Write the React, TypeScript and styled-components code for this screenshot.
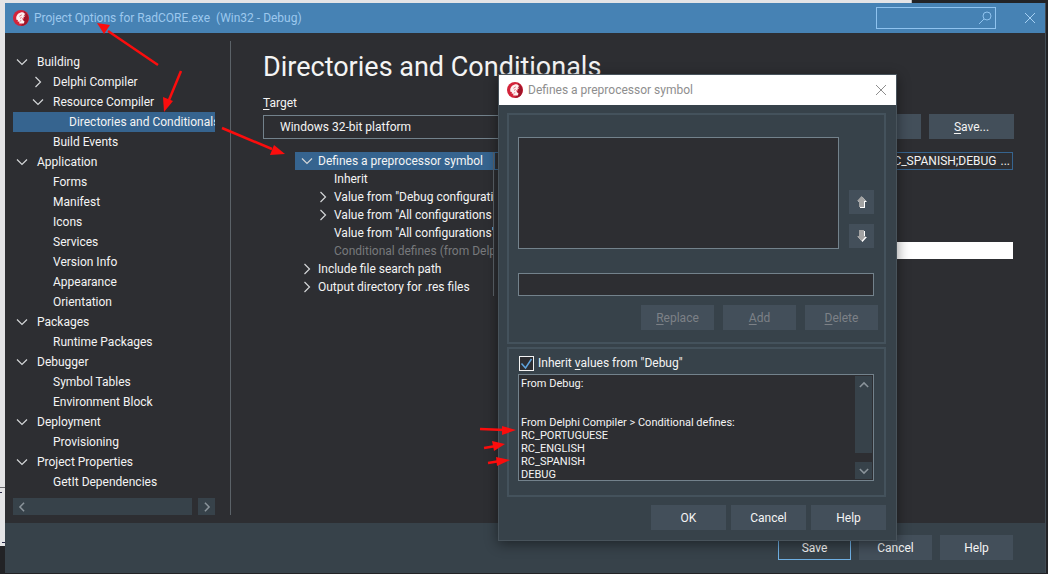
import React from "react";
import styled, { createGlobalStyle } from "styled-components";

const c = {
  base: "#2d2e32",
  panel: "#37424a",
  button: "#434f5a",
  select: "#36648f",
  title: "#4682b4",
  titleText: "#9cc8ee",
  line: "#73828c",
  group: "#44525c",
  text: "#f4f4f4",
  dim: "#7d8187",
};

const Global = createGlobalStyle`
  *, *::before, *::after { box-sizing: border-box; }
  html, body { margin: 0; }
  body, button, input, select, textarea {
    font-family: Roboto, "Open Sans", sans-serif;
    font-size: 12px;
    color: ${c.text};
  }
  u { text-underline-offset: 2px; }
`;

const Desktop = styled.div`
  position: relative;
  display: flex;
  min-height: 100vh;
  padding: 3px 2px 1px 5px;
  overflow: hidden;
  background:
    linear-gradient(#6b6b70, #6b6b70) 0 487px / 5px 1px no-repeat,
    linear-gradient(#2a2a48, #2a2a48) 0 492px / 2px 1px no-repeat,
    linear-gradient(#2a2a48, #2a2a48) 2px 542px / 3px 1px no-repeat,
    linear-gradient(#e4e4e6, #e4e4e6) 0 0 / 5px 546px no-repeat,
    linear-gradient(#e4e4e6, #e4e4e6) 0 0 / 87% 3px no-repeat,
    #222326;
`;

const Window = styled.main`
  display: flex;
  flex: 1;
  flex-direction: column;
  min-width: 0;
  background: ${c.base};
  border-right: 1px solid #414b53;
`;

const TitleBar = styled.header`
  display: flex;
  align-items: center;
  height: 30px;
  padding: 0 9px 0 8px;
  gap: 5px;
  background: ${c.title};
  color: ${c.titleText};
`;

const WindowTitle = styled.span`
  flex: 1;
  white-space: pre;
`;

const SearchBox = styled.label`
  display: flex;
  align-items: center;
  width: 120px;
  height: 22px;
  margin-right: 23px;
  padding-right: 3px;
  border: 1px solid #8fc3ef;
`;

const SearchInput = styled.input`
  flex: 1;
  min-width: 0;
  padding: 0 4px;
  border: 0;
  outline: 0;
  background: transparent;
`;

const CloseButton = styled.button`
  display: flex;
  padding: 0;
  border: 0;
  background: transparent;
  color: inherit;
`;

const Body = styled.div`
  display: flex;
  flex: 1;
  padding: 8px 0;
`;

const Sidebar = styled.nav`
  display: flex;
  flex: none;
  flex-direction: column;
  justify-content: space-between;
  width: 226px;
  padding: 0 15px 0 8px;
  border-right: 1px solid #5b6268;
`;

const Tree = styled.ul`
  margin: 0;
  padding: 11px 0 0;
  list-style: none;
`;

const TreeRow = styled.li<{ $level: number; $selected?: boolean }>`
  display: flex;
  align-items: center;
  height: 20px;
  padding-left: ${(p) => p.$level * 16 + 3}px;
  gap: 9px;
  overflow: hidden;
  white-space: nowrap;
  background: ${(p) => (p.$selected ? c.select : "transparent")};
`;

const ChevronSlot = styled.span`
  display: flex;
  flex: none;
  justify-content: center;
  width: 12px;
`;

const ScrollRow = styled.div`
  display: flex;
  gap: 6px;
  height: 17px;
`;

const ScrollPart = styled.button<{ $grow?: boolean }>`
  display: flex;
  flex: ${(p) => (p.$grow ? "1" : "none")};
  align-items: center;
  justify-content: ${(p) => (p.$grow ? "flex-start" : "center")};
  width: 17px;
  height: 17px;
  padding: 0 ${(p) => (p.$grow ? "4px" : "0")};
  border: 0;
  background: ${c.panel};
  color: #8b949b;
`;

const Content = styled.section`
  flex: 1;
  min-width: 0;
  padding: 8px 31px 0 32px;
`;

const Heading = styled.h1`
  margin: 0;
  font-size: 27px;
  font-weight: 400;
  line-height: 36px;
  white-space: nowrap;
`;

const FieldLabel = styled.label`
  display: block;
  margin: 9px 0 2px;
  line-height: 18px;
`;

const TargetRow = styled.div`
  display: flex;
  gap: 8px;
`;

const TargetSelect = styled.select`
  flex: 1;
  min-width: 0;
  height: 24px;
  margin-top: 1px;
  padding: 0 16px;
  appearance: none;
  border: 1px solid ${c.line};
  border-radius: 0;
  background: ${c.base};
`;

const Button = styled.button<{ $width: number; $focused?: boolean }>`
  flex: none;
  width: ${(p) => p.$width}px;
  height: 25px;
  padding: 0;
  border: 1px solid ${(p) => (p.$focused ? "#6fb0e4" : c.button)};
  background: ${(p) => (p.$focused ? c.panel : c.button)};
  &:disabled {
    color: ${c.dim};
  }
`;

const Properties = styled.table`
  width: calc(100% - 33px);
  margin: 13px 0 0 32px;
  border-collapse: separate;
  border-spacing: 0;
  table-layout: fixed;
`;

const NameCell = styled.th<{ $level: number; $selected?: boolean; $muted?: boolean }>`
  width: 199px;
  height: 18px;
  padding: 0 0 0 ${(p) => p.$level * 16 + 6}px;
  border-right: 1px solid #5b6268;
  font-weight: 400;
  line-height: 18px;
  text-align: left;
  color: ${(p) => (p.$muted ? "#77797c" : c.text)};
  background: ${(p) => (p.$selected ? c.select : "transparent")};
`;

const NameLine = styled.div`
  display: flex;
  align-items: center;
  gap: 5px;
  height: 18px;
  overflow: hidden;
  white-space: nowrap;
`;

const ValueCell = styled.td`
  height: 18px;
  padding: 0;
  text-align: right;
  vertical-align: top;
  line-height: 16px;
  white-space: nowrap;
`;

const ValueLine = styled.div`
  display: flex;
  justify-content: flex-end;
  gap: 4px;
  height: 18px;
  padding-right: 2px;
  overflow: hidden;
  border: 1px solid ${c.select};
`;

const EmptyValue = styled.div`
  height: 17px;
  margin-left: 24px;
  background: #fff;
`;

const MoreButton = styled.button`
  padding: 0;
  border: 0;
  background: transparent;
  line-height: 16px;
`;

const Footer = styled.footer<{ $inDialog?: boolean }>`
  display: flex;
  justify-content: flex-end;
  gap: ${(p) => (p.$inDialog ? 5 : 8)}px;
  padding: ${(p) => (p.$inDialog ? "8px 10px 10px" : "12px 32px 13px")};
  background: ${c.panel};
`;

const Dialog = styled.div`
  position: absolute;
  top: 74px;
  left: 498px;
  width: 399px;
  border: 1px solid #48535b;
  background: ${c.panel};
  box-shadow: 0 3px 12px rgba(0, 0, 0, 0.45);
`;

const DialogTitle = styled.div`
  display: flex;
  align-items: center;
  gap: 5px;
  height: 30px;
  padding: 0 9px 0 8px;
  background: #fff;
  color: #8e8e8e;
`;

const DialogBody = styled.div`
  display: flex;
  flex-direction: column;
  gap: 3px;
  padding: 8px 10px 0 8px;
`;

const Group = styled.div<{ $top: number; $bottom: number }>`
  padding: ${(p) => p.$top}px 10px ${(p) => p.$bottom}px 9px;
  border: 2px solid ${c.group};
`;

const ListRow = styled.div`
  display: flex;
  align-items: flex-end;
  gap: 10px;
`;

const ListBox = styled.div`
  flex: 1;
  height: 112px;
  border: 1px solid ${c.line};
  background: ${c.base};
`;

const MoveButtons = styled.div`
  display: flex;
  flex-direction: column;
  gap: 10px;
  padding-bottom: 1px;
`;

const MoveButton = styled.button`
  display: flex;
  align-items: center;
  justify-content: center;
  width: 25px;
  height: 24px;
  padding: 0;
  border: 0;
  background: ${c.button};
`;

const ValueInput = styled.input`
  display: block;
  width: 100%;
  height: 23px;
  margin-top: 24px;
  padding: 0 4px;
  border: 1px solid ${c.line};
  border-radius: 0;
  outline: 0;
  background: ${c.base};
`;

const ActionRow = styled.div`
  display: flex;
  justify-content: flex-end;
  gap: 9px;
  margin: 9px -4px 0 0;
`;

const CheckLabel = styled.label`
  display: flex;
  align-items: center;
  gap: 4px;
  height: 16px;
  line-height: 16px;
  white-space: pre;
`;

const Checkbox = styled.input`
  width: 15px;
  height: 15px;
  margin: 0 0 0 1px;
  appearance: none;
  border: 1px solid #f4f4f4;
  background: ${c.base}
    url("data:image/svg+xml,%3Csvg xmlns='http://www.w3.org/2000/svg' viewBox='0 0 13 13'%3E%3Cpath d='M1.500 6.500l4 4.500 6-9' fill='none' stroke='%235fa3dc' stroke-width='1.500'/%3E%3C/svg%3E")
    center / 13px 13px no-repeat;
`;

const MemoFrame = styled.div`
  display: flex;
  height: 107px;
  margin-top: 3px;
  padding: 1px;
  border: 1px solid ${c.line};
  background: ${c.base};
`;

const Memo = styled.textarea`
  flex: 1;
  min-width: 0;
  padding: 1px 1px 0;
  border: 0;
  outline: 0;
  resize: none;
  overflow: hidden;
  background: transparent;
  font-size: 11px;
  line-height: 13px;
`;

const MemoScroll = styled.div`
  display: flex;
  flex-direction: column;
  justify-content: space-between;
`;

const MemoThumb = styled.div`
  height: 77px;
  background: ${c.panel};
`;

const Arrows = styled.svg`
  position: absolute;
  top: 0;
  left: 0;
  pointer-events: none;
`;

const chevronPaths = {
  down: "M1 3.5l5 5 5-5",
  right: "M3.5 1l5 5-5 5",
  left: "M8.5 1l-5 5 5 5",
  up: "M1 8.5l5-5 5 5",
};

function Chevron({ dir, size = 12, color = "#d4d6d8" }: { dir: keyof typeof chevronPaths; size?: number; color?: string }) {
  return (
    <svg width={size} height={size} viewBox="0 0 12 12" fill="none" stroke={color} strokeWidth={size < 12 ? 1.8 : 1.2} aria-hidden>
      <path d={chevronPaths[dir]} />
    </svg>
  );
}

function Logo() {
  return (
    <svg width="16" height="16" viewBox="0 0 16 16" aria-hidden>
      <circle cx="8" cy="8" r="8" fill="#d3243a" />
      <path d="M11 1.200A8 8 0 0 1 13 14.200 8 8 0 0 1 8 16L10 13l1-5z" fill="#a01529" />
      <path
        d="M3.200 8C3.400 4.600 6 2.200 9.600 2.200L12.600 3.400l-1.800.4 1.900 1.400-2.100 0 1.500 1.700-2-.2 1 1.800-1.700-.4.4 2 1.700 1.300-.7 2H6.200l.2-1.900-1.700.2.2-1.700-1.500-.3z"
        fill="#fdf0f0"
      />
      <path d="M6.400 6.300l2.400-1.500M7 8.400l1.600-.9M7.800 10.200l-.2 1.200" stroke="#d3243a" strokeWidth=".6" />
    </svg>
  );
}

function Cross({ color }: { color: string }) {
  return (
    <svg width="12" height="12" viewBox="0 0 12 12" stroke={color} aria-hidden>
      <path d="M1 1l10 10M11 1L1 11" />
    </svg>
  );
}

function MoveArrow({ down }: { down?: boolean }) {
  const d = down ? "M3 0h5v6h2L5.500 11 1 6h2z" : "M5.500 0L10 5H8v6H3V5H1z";
  return (
    <svg width="12" height="13" viewBox="0 0 12 13" aria-hidden>
      <path d={d} fill="#fff" transform="translate(1 1)" />
      <path d={d} fill="#a3a3a3" />
    </svg>
  );
}

type Item = { text: string; level: number; open?: boolean; closed?: boolean; selected?: boolean };

const tree: Item[] = [
  { text: "Building", level: 0, open: true },
  { text: "Delphi Compiler", level: 1, closed: true },
  { text: "Resource Compiler", level: 1, open: true },
  { text: "Directories and Conditionals", level: 2, selected: true },
  { text: "Build Events", level: 1 },
  { text: "Application", level: 0, open: true },
  { text: "Forms", level: 1 },
  { text: "Manifest", level: 1 },
  { text: "Icons", level: 1 },
  { text: "Services", level: 1 },
  { text: "Version Info", level: 1 },
  { text: "Appearance", level: 1 },
  { text: "Orientation", level: 1 },
  { text: "Packages", level: 0, open: true },
  { text: "Runtime Packages", level: 1 },
  { text: "Debugger", level: 0, open: true },
  { text: "Symbol Tables", level: 1 },
  { text: "Environment Block", level: 1 },
  { text: "Deployment", level: 0, open: true },
  { text: "Provisioning", level: 1 },
  { text: "Project Properties", level: 0, open: true },
  { text: "GetIt Dependencies", level: 1 },
];

const properties: (Item & { value?: string; filled?: boolean })[] = [
  { text: "Defines a preprocessor symbol", level: 0, open: true, selected: true, value: "RC_PORTUGUESE;RC_ENGLISH;RC_SPANISH;DEBUG" },
  { text: "Inherit", level: 1 },
  { text: 'Value from "Debug configuration"', level: 1, closed: true },
  { text: 'Value from "All configurations - 32-bit"', level: 1, closed: true },
  { text: 'Value from "All configurations"', level: 1 },
  { text: "Conditional defines (from Delphi Compiler)", level: 1, filled: true },
  { text: "Include file search path", level: 0, closed: true },
  { text: "Output directory for .res files", level: 0, closed: true },
];

const inherited = `From Debug:


From Delphi Compiler > Conditional defines:
RC_PORTUGUESE
RC_ENGLISH
RC_SPANISH
DEBUG`;

const arrows = [
  { line: "M158 65L108 31", head: "97,23 110,25 104,34" },
  { line: "M181 71L169 100", head: "164,112 163,97 173,101" },
  { line: "M222 128L272 149", head: "285,154 270,155 274,145" },
  { line: "M480 429L505 430", head: "516,430 502,435 502,426" },
  { line: "M484 448L496 446", head: "505,444 494,451 492,441" },
  { line: "M488 463L500 461", head: "510,460 497,466 496,457" },
];

function Twisty({ item }: { item: Item }) {
  return (
    <ChevronSlot>
      {item.open && <Chevron dir="down" />}
      {item.closed && <Chevron dir="right" />}
    </ChevronSlot>
  );
}

export default function App() {
  return (
    <Desktop>
      <Global />
      <Window>
        <TitleBar>
          <Logo />
          <WindowTitle>Project Options for RadCORE.exe  (Win32 - Debug)</WindowTitle>
          <SearchBox>
            <SearchInput type="text" aria-label="Search options" />
            <svg width="14" height="14" viewBox="0 0 14 14" fill="none" stroke="#8fc3ef" aria-hidden>
              <circle cx="9" cy="5" r="4" />
              <path d="M6 8l-5 5" />
            </svg>
          </SearchBox>
          <CloseButton aria-label="Close">
            <Cross color="#a6d0f3" />
          </CloseButton>
        </TitleBar>
        <Body>
          <Sidebar>
            <Tree>
              {tree.map((item) => (
                <TreeRow key={item.text} $level={item.level} $selected={item.selected}>
                  <Twisty item={item} />
                  <span>{item.text}</span>
                </TreeRow>
              ))}
            </Tree>
            <ScrollRow>
              <ScrollPart $grow aria-label="Scroll left">
                <Chevron dir="left" size={10} color="#8b949b" />
              </ScrollPart>
              <ScrollPart aria-label="Scroll right">
                <Chevron dir="right" size={10} color="#8b949b" />
              </ScrollPart>
            </ScrollRow>
          </Sidebar>
          <Content>
            <Heading>Directories and Conditionals</Heading>
            <FieldLabel htmlFor="target">
              <u>T</u>arget
            </FieldLabel>
            <TargetRow>
              <TargetSelect id="target">
                <option>Windows 32-bit platform</option>
              </TargetSelect>
              <Button $width={85}>Load...</Button>
              <Button $width={85}>
                <u>S</u>ave...
              </Button>
            </TargetRow>
            <Properties>
              <tbody>
                {properties.map((item) => (
                  <tr key={item.text}>
                    <NameCell scope="row" $level={item.level} $selected={item.selected} $muted={item.filled}>
                      <NameLine>
                        <Twisty item={item} />
                        <span>{item.text}</span>
                      </NameLine>
                    </NameCell>
                    <ValueCell>
                      {item.value && (
                        <ValueLine>
                          <span>{item.value}</span>
                          <MoreButton>...</MoreButton>
                        </ValueLine>
                      )}
                      {item.filled && <EmptyValue />}
                    </ValueCell>
                  </tr>
                ))}
              </tbody>
            </Properties>
          </Content>
        </Body>
        <Footer>
          <Button $width={73} $focused>Save</Button>
          <Button $width={73}>Cancel</Button>
          <Button $width={73}>Help</Button>
        </Footer>
      </Window>

      <Dialog role="dialog" aria-labelledby="dialog-title">
        <DialogTitle>
          <Logo />
          <WindowTitle id="dialog-title">Defines a preprocessor symbol</WindowTitle>
          <CloseButton aria-label="Close dialog">
            <Cross color="#8e8e8e" />
          </CloseButton>
        </DialogTitle>
        <DialogBody>
          <Group $top={22} $bottom={12}>
            <ListRow>
              <ListBox role="listbox" aria-label="Symbols" />
              <MoveButtons>
                <MoveButton aria-label="Move up">
                  <MoveArrow />
                </MoveButton>
                <MoveButton aria-label="Move down">
                  <MoveArrow down />
                </MoveButton>
              </MoveButtons>
            </ListRow>
            <ValueInput type="text" aria-label="Symbol" />
            <ActionRow>
              <Button $width={73} disabled><u>R</u>eplace</Button>
              <Button $width={73} disabled><u>A</u>dd</Button>
              <Button $width={73} disabled><u>D</u>elete</Button>
            </ActionRow>
          </Group>
          <Group $top={6} $bottom={14}>
            <CheckLabel>
              <Checkbox type="checkbox" defaultChecked />
              <span>Inherit <u>v</u>alues from "Debug"</span>
            </CheckLabel>
            <MemoFrame>
              <Memo readOnly aria-label="Inherited values" value={inherited} />
              <MemoScroll>
                <MemoThumb>
                  <ScrollPart aria-label="Scroll up">
                    <Chevron dir="up" size={10} color="#8b949b" />
                  </ScrollPart>
                </MemoThumb>
                <ScrollPart aria-label="Scroll down">
                  <Chevron dir="down" size={10} color="#8b949b" />
                </ScrollPart>
              </MemoScroll>
            </MemoFrame>
          </Group>
        </DialogBody>
        <Footer $inDialog>
          <Button $width={75}>OK</Button>
          <Button $width={75}>Cancel</Button>
          <Button $width={75}>Help</Button>
        </Footer>
      </Dialog>

      <Arrows width="520" height="480" viewBox="0 0 520 480" aria-hidden>
        {arrows.map((a) => (
          <g key={a.line} fill="#fb0d0d" stroke="#fb0d0d">
            <path d={a.line} strokeWidth="2.500" />
            <polygon points={a.head} stroke="none" />
          </g>
        ))}
      </Arrows>
    </Desktop>
  );
}
